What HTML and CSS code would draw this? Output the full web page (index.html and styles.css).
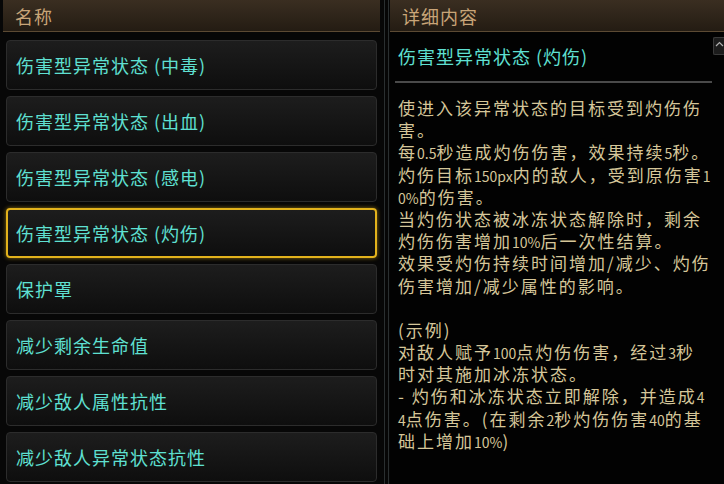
FILE: index.html
```html
<!DOCTYPE html>
<html lang="zh">
<head>
<meta charset="utf-8">
<link rel="stylesheet" href="styles.css">
</head>
<body>
<div class="app">
  <div class="left">
    <div class="head"><span>名称</span></div>
    <ul class="list">
      <li class="item">伤害型异常状态 (中毒)</li>
      <li class="item">伤害型异常状态 (出血)</li>
      <li class="item">伤害型异常状态 (感电)</li>
      <li class="item selected">伤害型异常状态 (灼伤)</li>
      <li class="item">保护罩</li>
      <li class="item">减少剩余生命值</li>
      <li class="item">减少敌人属性抗性</li>
      <li class="item">减少敌人异常状态抗性</li>
    </ul>
  </div>
  <div class="divider"><i></i><i></i></div>
  <div class="right">
    <div class="head"><span>详细内容</span></div>
    <div class="scroll-up"><svg width="9" height="6" viewBox="0 0 9 6"><path d="M1 5 L4.5 1.5 L8 5" fill="none" stroke="#b0b0b0" stroke-width="1.2"/></svg></div>
    <div class="detail">
      <div class="title">伤害型异常状态 (灼伤)</div>
      <div class="sep"></div>
      <div class="body">
        <div class="ln">使进入该异常状态的目标受到灼伤伤</div>
        <div class="ln">害。</div>
        <div class="ln">每<span class="n">0.5</span>秒造成灼伤伤害，效果持续<span class="n">5</span>秒。</div>
        <div class="ln">灼伤目标<span class="n">150px</span>内的敌人，受到原伤害<span class="n">1</span></div>
        <div class="ln"><span class="n">0%</span>的伤害。</div>
        <div class="ln">当灼伤状态被冰冻状态解除时，剩余</div>
        <div class="ln">灼伤伤害增加<span class="n">10%</span>后一次性结算。</div>
        <div class="ln">效果受灼伤持续时间增加/减少、灼伤</div>
        <div class="ln">伤害增加/减少属性的影响。</div>
        <div class="ln">&nbsp;</div>
        <div class="ln">(示例)</div>
        <div class="ln">对敌人赋予<span class="n">100</span>点灼伤伤害，经过<span class="n">3</span>秒</div>
        <div class="ln">时对其施加冰冻状态。</div>
        <div class="ln">- 灼伤和冰冻状态立即解除，并造成<span class="n">4</span></div>
        <div class="ln"><span class="n">4</span>点伤害。(在剩余<span class="n">2</span>秒灼伤伤害<span class="n">40</span>的基</div>
        <div class="ln">础上增加<span class="n">10%</span>)</div>
      </div>
    </div>
  </div>
</div>
</body>
</html>
```
FILE: styles.css
```css
* { box-sizing: border-box; }
html, body { margin: 0; padding: 0; }
body {
  width: 724px;
  height: 484px;
  overflow: hidden;
  background: #030303;
  font-family: "Noto Sans CJK SC", "Noto Sans", sans-serif;
}
.app {
  display: flex;
  height: 484px;
}
.left {
  width: 383px;
  flex: 0 0 383px;
  background: #070707;
  display: flex;
  flex-direction: column;
}
.head {
  height: 32px;
  background: linear-gradient(#3a2e21, #241c13);
  border-bottom: 1px solid #5c4a33;
  display: flex;
  align-items: center;
  padding-left: 12px;
  color: #c9a578;
  font-size: 18px;
  line-height: 22px;
  letter-spacing: 1px;
}
.left .head { margin: 0 3px; }
.list {
  list-style: none;
  margin: 8px 6px 0;
  padding: 0;
  display: flex;
  flex-direction: column;
  gap: 6px;
}
.item {
  height: 50px;
  display: flex;
  align-items: center;
  padding-left: 9px;
  border: 1px solid #2c2c2c;
  border-radius: 4px;
  background: linear-gradient(#1d1d1d, #0e0e0e);
  color: #5fe0d2;
  font-size: 18px;
  line-height: 22px;
  letter-spacing: 1px;
  white-space: nowrap;
}
.item.selected {
  border: 2px solid #e2b21c;
  padding-left: 8px;
  box-shadow: 0 0 4px rgba(226, 178, 28, 0.6);
}
.divider {
  flex: 0 0 7px;
  display: flex;
  justify-content: space-between;
  padding: 0 1px;
  background: #060606;
}
.divider i {
  display: block;
  width: 1px;
  background: #2a2f30;
}
.right {
  flex: 1;
  min-width: 0;
  position: relative;
  background: #020202;
}
.right .head { padding-left: 12px; }
.scroll-up {
  position: absolute;
  right: 0;
  top: 37px;
  width: 11px;
  height: 18px;
  background: #1c1c1c;
  border: 1px solid #3a3a3a;
  border-right: none;
  border-radius: 2px 0 0 2px;
  display: flex;
  justify-content: center;
  padding-top: 3px;
}
.detail {
  padding: 13px 12px 0 8px;
}
.title {
  line-height: 22px;
  color: #5fe0d2;
  font-size: 18px;
  letter-spacing: 1px;
  white-space: nowrap;
}
.sep {
  height: 2px;
  background: #4a4a4a;
  margin: 14px 0 0 -3px;
}
.body {
  margin-top: 14px;
  color: #d5c699;
  font-size: 17px;
  letter-spacing: 2px;
  line-height: 22.2px;
}
.ln {
  white-space: nowrap;
  height: 22.2px;
}
.n {
  font-size: 14px;
  letter-spacing: 0;
  line-height: 1;
}
```
